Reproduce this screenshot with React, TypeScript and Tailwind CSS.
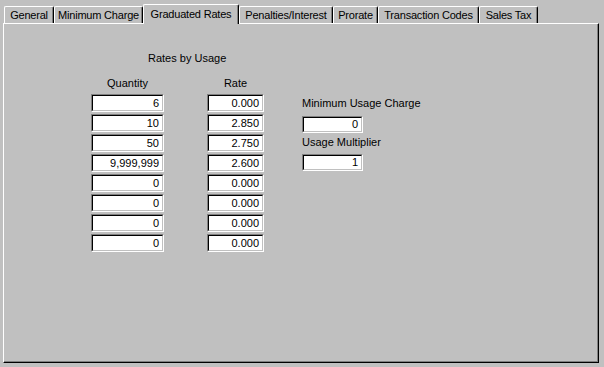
import React from "react";

const tabs = [
  { label: "General", w: 50 },
  { label: "Minimum Charge", w: 89 },
  { label: "Graduated Rates", w: 96, selected: true },
  { label: "Penalties/Interest", w: 94 },
  { label: "Prorate", w: 45 },
  { label: "Transaction Codes", w: 101 },
  { label: "Sales Tax", w: 59 },
];

const rows = [
  ["6", "0.000"],
  ["10", "2.850"],
  ["50", "2.750"],
  ["9,999,999", "2.600"],
  ["0", "0.000"],
  ["0", "0.000"],
  ["0", "0.000"],
  ["0", "0.000"],
];

function Field({ value, w, h = 18 }: { value: string; w: number; h?: number }) {
  return (
    <div
      className="border border-t-[#808080] border-l-[#808080] border-b-white border-r-white"
      style={{ width: w, height: h }}
    >
      <div className="h-full w-full border border-t-black border-l-black border-b-[#c0c0c0] border-r-[#c0c0c0] bg-white flex items-center justify-end pr-[3px] text-[11px] leading-none text-black">
        {value}
      </div>
    </div>
  );
}

export default function App() {
  return (
    <div
      className="w-[604px] h-[367px] bg-[#c0c0c0] text-black overflow-hidden"
      style={{ fontFamily: '"Liberation Sans", Arial, sans-serif' }}
    >
      <div className="flex items-end pl-[4px] pt-[4px] h-[23px]">
        {tabs.map((t) =>
          t.selected ? (
            <div
              key={t.label}
              className="relative z-10 h-[20px] -mb-px bg-[#c0c0c0] border-l border-t border-l-white border-t-white border-r border-r-black rounded-t-[2px] shadow-[inset_-1px_0_#808080] flex items-start justify-center pt-[3px] text-[11px] leading-[13px] tracking-[-0.2px] whitespace-nowrap"
              style={{ width: t.w }}
            >
              {t.label}
            </div>
          ) : (
            <div
              key={t.label}
              className="h-[17px] border-l border-t border-l-white border-t-white border-r border-r-black rounded-t-[2px] shadow-[inset_-1px_0_#808080] flex items-start justify-center pt-[2px] text-[11px] leading-[13px] tracking-[-0.2px] whitespace-nowrap"
              style={{ width: t.w }}
            >
              {t.label}
            </div>
          )
        )}
      </div>
      <div className="ml-[3px] w-[596px] h-[340px] border border-l-white border-t-white border-r-black border-b-black shadow-[inset_-1px_-1px_#808080]">
        <div className="flex items-start pt-[28px] text-[11px] leading-[13px]">
          <div className="ml-[87px] flex flex-col">
            <div className="ml-[57px]">Rates by Usage</div>
            <div className="flex mt-[12px] gap-[43px]">
              <div className="w-[73px] text-center">Quantity</div>
              <div className="w-[57px] text-center">Rate</div>
            </div>
            <div className="flex flex-col gap-[2px] mt-[4px]">
              {rows.map((r, i) => (
                <div key={i} className="flex gap-[43px]">
                  <Field value={r[0]} w={73} />
                  <Field value={r[1]} w={57} />
                </div>
              ))}
            </div>
          </div>
          <div className="ml-[38px] mt-[45px] flex flex-col">
            <div>Minimum Usage Charge</div>
            <div className="mt-[6px]">
              <Field value="0" w={61} h={17} />
            </div>
            <div className="mt-[3px]">Usage Multiplier</div>
            <div className="mt-[5px]">
              <Field value="1" w={61} h={17} />
            </div>
          </div>
        </div>
      </div>
    </div>
  );
}
